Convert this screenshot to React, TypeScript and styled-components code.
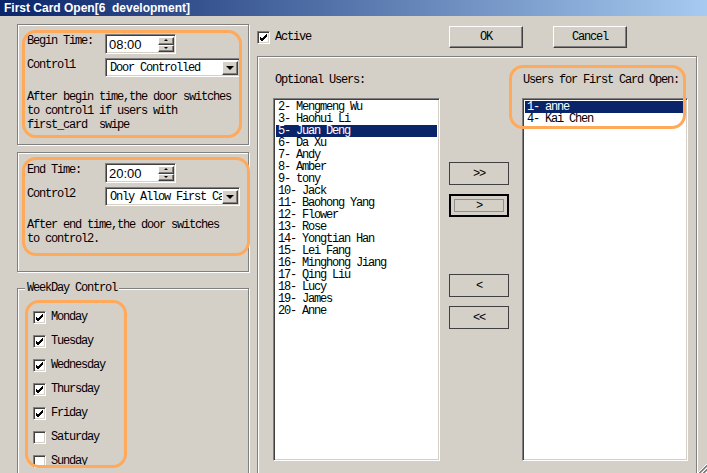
import React from "react";
import styled, { createGlobalStyle, css } from "styled-components";

const GlobalStyle = createGlobalStyle`
  html, body {
    margin: 0;
    padding: 0;
    background: #d4d0c8;
  }
`;

const monoText = css`
  font-family: "Liberation Mono", "DejaVu Sans Mono", monospace;
  font-size: 12px;
  letter-spacing: -1.2px;
  color: #000;
`;

const raised = css`
  border: 1px solid;
  border-color: #fff #404040 #404040 #fff;
  box-shadow: inset -1px -1px 0 #808080;
  background: #d4d0c8;
`;

const sunken = css`
  border: 1px solid;
  border-color: #808080 #fff #fff #808080;
  box-shadow: inset 1px 1px 0 #404040, inset -1px -1px 0 #d4d0c8;
`;

const etched = css`
  border: 1px solid #808080;
  box-shadow: inset 1px 1px 0 #fff, 1px 1px 0 #fff;
`;

const Window = styled.div`
  position: relative;
  width: 707px;
  height: 473px;
  overflow: hidden;
  background: #d4d0c8;
  display: flex;
  flex-direction: column;
`;

const TitleBar = styled.div`
  height: 16px;
  line-height: 16px;
  padding-left: 4px;
  background: linear-gradient(to right, #0a246a, #a6caf0);
  color: #fff;
  font-family: "Liberation Sans", Arial, sans-serif;
  font-weight: bold;
  font-size: 12px;
  white-space: pre;
  flex-shrink: 0;
`;

const Body = styled.div`
  display: flex;
  gap: 8px;
  padding: 8px 0 0 17px;
`;

const LeftCol = styled.div`
  width: 232px;
  flex-shrink: 0;
  display: flex;
  flex-direction: column;
`;

const Panel = styled.div<{ $h: number; $top: number; $gap: number }>`
  position: relative;
  box-sizing: border-box;
  height: ${(p) => p.$h}px;
  margin-top: ${(p) => p.$gap}px;
  padding: ${(p) => p.$top}px 0 0 9px;
  ${etched}
`;

const FieldGrid = styled.div`
  display: grid;
  grid-template-columns: 78px 135px;
  row-gap: 4px;
  align-items: start;
`;

const Label = styled.div`
  ${monoText}
  line-height: 14px;
  white-space: pre;
`;

const TimeBox = styled.div`
  box-sizing: border-box;
  width: 71px;
  height: 20px;
  display: flex;
  background: #fff;
  ${sunken}
  padding: 2px 1px 1px 2px;
`;

const TimeText = styled.div`
  flex: 1;
  font-family: "Liberation Sans", Arial, sans-serif;
  font-size: 13px;
  line-height: 15px;
  color: #000;
  padding-left: 1px;
`;

const Spinner = styled.div`
  width: 16px;
  display: flex;
  flex-direction: column;
`;

const SpinButton = styled.div`
  box-sizing: border-box;
  flex: 1;
  ${raised}
  display: flex;
  align-items: center;
  justify-content: center;
`;

const Combo = styled.div`
  box-sizing: border-box;
  width: 135px;
  height: 19px;
  display: flex;
  background: #fff;
  ${sunken}
  padding: 2px 1px 1px 2px;
`;

const ComboText = styled.div`
  flex: 1;
  overflow: hidden;
  ${monoText}
  line-height: 14px;
  padding-left: 2px;
  white-space: pre;
`;

const ComboArrow = styled.div`
  box-sizing: border-box;
  width: 16px;
  ${raised}
  display: flex;
  align-items: center;
  justify-content: center;
`;

const Desc = styled.div`
  ${monoText}
  line-height: 14px;
  white-space: pre;
  margin-top: ${(p: { $gap: number }) => p.$gap}px;
`;

const GroupBox = styled.div`
  position: relative;
  box-sizing: border-box;
  height: 220px;
  margin-top: 16px;
  padding: 16px 0 0 15px;
  ${etched}
`;

const Legend = styled.div`
  position: absolute;
  top: -8px;
  left: 7px;
  padding: 0 2px;
  background: #d4d0c8;
  ${monoText}
  line-height: 14px;
`;

const CheckList = styled.div`
  position: relative;
  display: flex;
  flex-direction: column;
`;

const CheckRow = styled.div`
  display: flex;
  align-items: center;
  gap: 5px;
  height: 24px;
`;

const Box = styled.div`
  box-sizing: border-box;
  width: 13px;
  height: 13px;
  background: #fff;
  ${sunken}
  display: flex;
  align-items: center;
  justify-content: center;
`;

const Annotation = styled.div<{ $l: number; $t: number; $w: number; $h: number }>`
  position: absolute;
  left: ${(p) => p.$l}px;
  top: ${(p) => p.$t}px;
  width: ${(p) => p.$w}px;
  height: ${(p) => p.$h}px;
  box-sizing: border-box;
  border: 3px solid #ffa95a;
  border-radius: 14px;
  pointer-events: none;
`;

const RightCol = styled.div`
  width: 440px;
  display: flex;
  flex-direction: column;
`;

const TopRow = styled.div`
  display: flex;
  align-items: center;
  height: 22px;
  margin-top: 2px;
`;

const ActiveCheck = styled.div`
  width: 192px;
  display: flex;
  align-items: center;
  gap: 5px;
`;

const Buttons = styled.div`
  display: flex;
  gap: 30px;
`;

const PushButton = styled.div`
  box-sizing: border-box;
  width: 74px;
  height: 22px;
  ${raised}
  ${monoText}
  display: flex;
  align-items: center;
  justify-content: center;
`;

const BigPanel = styled.div`
  position: relative;
  box-sizing: border-box;
  height: 440px;
  margin-top: 8px;
  padding: 16px 0 0 15px;
  ${etched}
  display: grid;
  grid-template-columns: 167px 82px 166px;
  grid-template-rows: 14px 363px;
  row-gap: 11px;
`;

const ListTitle = styled.div<{ $indent: number }>`
  ${monoText}
  line-height: 14px;
  padding-left: ${(p) => p.$indent}px;
  white-space: pre;
`;

const ListBox = styled.div`
  box-sizing: border-box;
  background: #fff;
  ${sunken}
  padding: 2px;
`;

const ListItem = styled.div<{ $selected?: boolean }>`
  ${monoText}
  height: 12px;
  line-height: 12px;
  padding-left: 2px;
  white-space: pre;
  background: ${(p) => (p.$selected ? "#0a246a" : "transparent")};
  color: ${(p) => (p.$selected ? "#fff" : "#000")};
`;

const MoveColumn = styled.div`
  display: flex;
  flex-direction: column;
  gap: 9px;
  padding: 64px 0 0 9px;
`;

const MoveButton = styled.div<{ $focused?: boolean; $push?: number }>`
  box-sizing: border-box;
  width: 60px;
  height: 23px;
  margin-top: ${(p) => p.$push ?? 0}px;
  border: ${(p) => (p.$focused ? "2px solid #000" : "1px solid #404040")};
  background: #d4d0c8;
  ${monoText}
  display: flex;
  align-items: center;
  justify-content: center;
`;

const FocusRing = styled.div`
  box-sizing: border-box;
  align-self: stretch;
  flex: 1;
  margin: 3px;
  border: 1px solid #909090;
  display: flex;
  align-items: center;
  justify-content: center;
`;

const Grip = styled.div`
  position: absolute;
  right: 0;
  bottom: 0;
  width: 12px;
  height: 12px;
`;

const Check = () => (
  <svg width="9" height="9" viewBox="0 0 9 9">
    <path d="M1 4 L3 6 L8 1 M1 5 L3 7 L8 2 M1 6 L3 8 L8 3" stroke="#000" strokeWidth="1" fill="none" shapeRendering="crispEdges" />
  </svg>
);

const Tri = ({ up, size }: { up?: boolean; size: number }) => (
  <svg width={size * 2 + 1} height={size + 1} viewBox={`0 0 ${size * 2 + 1} ${size + 1}`}>
    <polygon
      points={up ? `0,${size} ${size * 2},${size} ${size},0` : `0,0 ${size * 2},0 ${size},${size}`}
      fill="#000"
    />
  </svg>
);

const optionalUsers = [
  "2- Mengmeng Wu",
  "3- Haohui Li",
  "5- Juan Deng",
  "6- Da Xu",
  "7- Andy",
  "8- Amber",
  "9- tony",
  "10- Jack",
  "11- Baohong Yang",
  "12- Flower",
  "13- Rose",
  "14- Yongtian Han",
  "15- Lei Fang",
  "16- Minghong Jiang",
  "17- Qing Liu",
  "18- Lucy",
  "19- James",
  "20- Anne",
];

const firstCardUsers = ["1- anne", "4- Kai Chen"];

const weekdays = [
  { name: "Monday", on: true },
  { name: "Tuesday", on: true },
  { name: "Wednesday", on: true },
  { name: "Thursday", on: true },
  { name: "Friday", on: true },
  { name: "Saturday", on: false },
  { name: "Sunday", on: false },
];

const TimeField = ({ value }: { value: string }) => (
  <TimeBox>
    <TimeText>{value}</TimeText>
    <Spinner>
      <SpinButton>
        <Tri up size={2} />
      </SpinButton>
      <SpinButton>
        <Tri size={2} />
      </SpinButton>
    </Spinner>
  </TimeBox>
);

const Dropdown = ({ value }: { value: string }) => (
  <Combo>
    <ComboText>{value}</ComboText>
    <ComboArrow>
      <Tri size={4} />
    </ComboArrow>
  </Combo>
);

export default function App() {
  return (
    <Window>
      <GlobalStyle />
      <TitleBar>{"First Card Open[6  development]"}</TitleBar>
      <Body>
        <LeftCol>
          <Panel $h={121} $top={9} $gap={0}>
            <FieldGrid>
              <Label>Begin Time:</Label>
              <TimeField value="08:00" />
              <Label>Control1</Label>
              <Dropdown value="Door Controlled" />
            </FieldGrid>
            <Desc $gap={13}>
              {"After begin time,the door switches\nto control1 if users with\nfirst_card  swipe"}
            </Desc>
            <Annotation $l={4} $t={5} $w={220} $h={108} />
          </Panel>
          <Panel $h={120} $top={10} $gap={7}>
            <FieldGrid>
              <Label>End Time:</Label>
              <TimeField value="20:00" />
              <Label>Control2</Label>
              <Dropdown value="Only Allow First Card" />
            </FieldGrid>
            <Desc $gap={12}>{"After end time,the door switches\nto control2."}</Desc>
            <Annotation $l={4} $t={4} $w={228} $h={99} />
          </Panel>
          <GroupBox>
            <Legend>WeekDay Control</Legend>
            <CheckList>
              {weekdays.map((d) => (
                <CheckRow key={d.name}>
                  <Box>{d.on && <Check />}</Box>
                  <Label>{d.name}</Label>
                </CheckRow>
              ))}
              <Annotation $l={-8} $t={-5} $w={102} $h={168} />
            </CheckList>
          </GroupBox>
        </LeftCol>
        <RightCol>
          <TopRow>
            <ActiveCheck>
              <Box>
                <Check />
              </Box>
              <Label>Active</Label>
            </ActiveCheck>
            <Buttons>
              <PushButton>OK</PushButton>
              <PushButton>Cancel</PushButton>
            </Buttons>
          </TopRow>
          <BigPanel>
            <ListTitle $indent={2}>Optional Users:</ListTitle>
            <div />
            <ListTitle $indent={1}>Users for First Card Open:</ListTitle>
            <ListBox>
              {optionalUsers.map((u) => (
                <ListItem key={u} $selected={u === "5- Juan Deng"}>
                  {u}
                </ListItem>
              ))}
            </ListBox>
            <MoveColumn>
              <MoveButton>{">>"}</MoveButton>
              <MoveButton $focused>
                <FocusRing>{">"}</FocusRing>
              </MoveButton>
              <MoveButton $push={48}>{"<"}</MoveButton>
              <MoveButton>{"<<"}</MoveButton>
            </MoveColumn>
            <ListBox>
              {firstCardUsers.map((u) => (
                <ListItem key={u} $selected={u === "1- anne"}>
                  {u}
                </ListItem>
              ))}
            </ListBox>
            <Annotation $l={251} $t={8} $w={177} $h={64} />
          </BigPanel>
        </RightCol>
      </Body>
      <Grip>
        <svg width="12" height="12" viewBox="0 0 12 12">
          {[0, 4, 8].map((o) => (
            <g key={o}>
              <line x1={12 - (11 - o)} y1="12" x2="12" y2={12 - (11 - o)} stroke="#fff" strokeWidth="1" />
              <line x1={12 - (10 - o)} y1="12" x2="12" y2={12 - (10 - o)} stroke="#808080" strokeWidth="1" />
              <line x1={12 - (9 - o)} y1="12" x2="12" y2={12 - (9 - o)} stroke="#808080" strokeWidth="1" />
            </g>
          ))}
        </svg>
      </Grip>
    </Window>
  );
}
